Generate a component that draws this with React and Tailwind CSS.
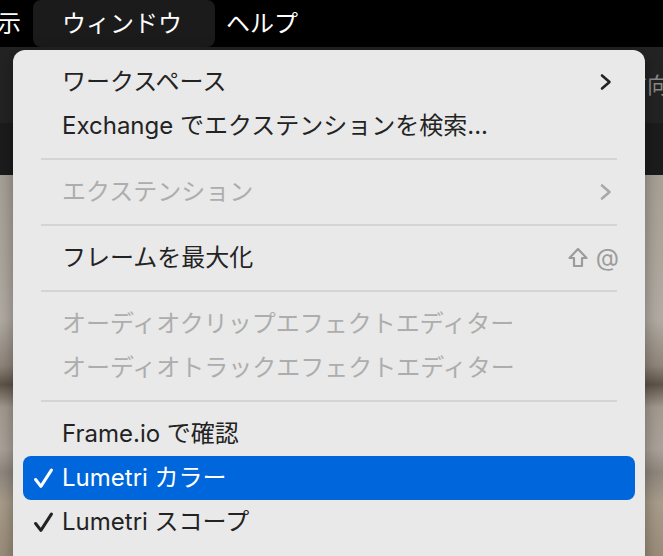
import { useState } from 'react';

const FONT = { fontFamily: 'Inter, "Noto Sans CJK JP", sans-serif' };

// menu entries: type item | sep
const MENU = [
  { label: 'ワークスペース', submenu: true },
  { label: 'Exchange でエクステンションを検索...' },
  { sep: true },
  { label: 'エクステンション', submenu: true, disabled: true },
  { sep: true },
  { label: 'フレームを最大化', shortcut: true },
  { sep: true },
  { label: 'オーディオクリップエフェクトエディター', disabled: true },
  { label: 'オーディオトラックエフェクトエディター', disabled: true },
  { sep: true },
  { label: 'Frame.io で確認' },
  { label: 'Lumetri カラー', checked: true, active: true },
  { label: 'Lumetri スコープ', checked: true },
];

function Chevron({ color }) {
  return (
    <svg width="14" height="18" viewBox="0 0 14 18" fill="none">
      <path d="M3 2.5 L10.5 9 L3 15.5" stroke={color} strokeWidth="2.6" strokeLinecap="round" strokeLinejoin="round" />
    </svg>
  );
}

function Check({ color }) {
  return (
    <svg width="21" height="21" viewBox="0 0 20 20" fill="none">
      <path d="M2.5 11 L7.5 17.5 L17.5 2" stroke={color} strokeWidth="2.9" strokeLinecap="round" strokeLinejoin="round" />
    </svg>
  );
}

function ShiftIcon() {
  return (
    <svg width="20" height="22" viewBox="0 0 20 22" fill="none">
      <path d="M10 2 L18.5 11 L14 11 L14 19 L6 19 L6 11 L1.5 11 Z" stroke="#9c9c9c" strokeWidth="2.2" strokeLinejoin="round" />
    </svg>
  );
}

function MenuItem({ item }) {
  const text = item.active ? 'text-white' : item.disabled ? 'text-[#adadad]' : 'text-[#232323]';
  return (
    <div
      className={`h-[44px] flex items-center pr-[22px] rounded-[8px] ${item.active ? 'bg-[#0066db]' : ''}`}
    >
      <div className="w-[39px] flex justify-center pl-[2px]">
        {item.checked && <Check color={item.active ? '#ffffff' : '#232323'} />}
      </div>
      <span className={`flex-1 text-[24px] leading-none whitespace-nowrap ${text}`}>{item.label}</span>
      {item.submenu && <Chevron color={item.disabled ? '#a8a8a8' : '#232323'} />}
      {item.shortcut && (
        <div className="flex items-center gap-[8px] -mr-[6px]">
          <ShiftIcon />
          <span className="text-[24px] leading-none text-[#9c9c9c]">@</span>
        </div>
      )}
    </div>
  );
}

export default function App() {
  const [open] = useState(true);

  return (
    <div className="relative w-[663px] h-[556px] overflow-hidden bg-black" style={FONT}>
      {/* menu bar */}
      <div className="h-[47px] bg-black flex items-center text-white text-[24px] leading-none">
        <span className="-ml-[3px] w-[36px]">示</span>
        <div className="h-[47px] w-[182px] rounded-[8px] bg-[#1b1b1b] flex items-center pl-[29px]">
          ウィンドウ
        </div>
        <span className="ml-[11px]">ヘルプ</span>
      </div>

      {/* toolbar rows */}
      <div className="h-[76px] bg-[#232323] flex items-center justify-end">
        <span className="text-[22px] text-[#8a8a8a] -mr-[6px] whitespace-nowrap">方向</span>
      </div>
      <div className="h-[52px] bg-[#1c1c1c]" />

      {/* blurred photo */}
      <div className="h-[381px] bg-[linear-gradient(to_bottom,#a7a097_0%,#aca59c_20%,#b1aba3_38%,#8f857a_50%,#5e5348_55%,#a39a8f_61%,#aaa29a_72%,#8f877e_78%,#a89c8a_86%,#9b8c7a_100%)]" />

      {/* dropdown */}
      {open && (
        <div className="absolute left-[13px] top-[50px] w-[632px] bg-[#e9e9e9] rounded-[12px] px-[10px] pt-[10px] pb-[24px] shadow-[0_4px_16px_rgba(0,0,0,0.35)]">
          {MENU.map((item, i) =>
            item.sep ? (
              <div key={i} className="h-[22px] flex items-center px-[18px]">
                <div className="h-[2px] w-full bg-[#d4d4d4]" />
              </div>
            ) : (
              <MenuItem key={i} item={item} />
            )
          )}
        </div>
      )}
    </div>
  );
}
